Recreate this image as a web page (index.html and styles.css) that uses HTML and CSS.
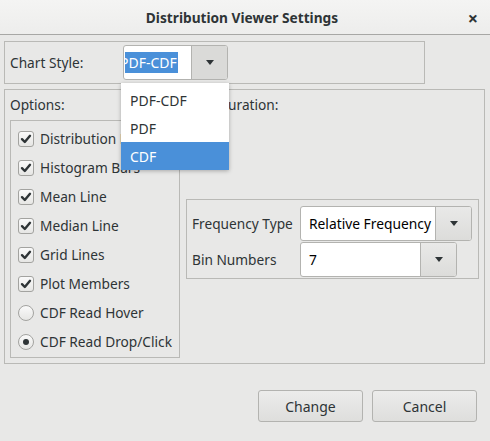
FILE: index.html
```html
<!DOCTYPE html>
<html>
<head>
<meta charset="utf-8">
<link rel="stylesheet" href="styles.css">
</head>
<body>
<div class="dialog">
  <div class="titlebar">
    <span class="title">Distribution Viewer Settings</span>
    <span class="close">×</span>
  </div>
  <div class="content">
    <div class="frame chart-frame">
      <span class="chart-label">Chart Style:</span>
      <div class="combo combo-chart">
        <div class="entry entry-sel"><div class="clip"><span class="sel">PDF-CDF</span></div></div>
        <div class="combo-btn"><span class="arrow"></span></div>
      </div>
    </div>
    <div class="frame options-frame">
      <div class="group-label">Options:</div>
      <div class="group-label">Configuration:</div>
      <div class="inner checks">
        <div class="row"><span class="check"><svg viewBox="0 0 16 16" width="16" height="16"><path d="M4 8.2 L6.8 11 L12 4.8" fill="none" stroke="#2e3436" stroke-width="2.4" stroke-linecap="round" stroke-linejoin="round"/></svg></span>Distribution Line</div>
        <div class="row"><span class="check"><svg viewBox="0 0 16 16" width="16" height="16"><path d="M4 8.2 L6.8 11 L12 4.8" fill="none" stroke="#2e3436" stroke-width="2.4" stroke-linecap="round" stroke-linejoin="round"/></svg></span>Histogram Bars</div>
        <div class="row"><span class="check"><svg viewBox="0 0 16 16" width="16" height="16"><path d="M4 8.2 L6.8 11 L12 4.8" fill="none" stroke="#2e3436" stroke-width="2.4" stroke-linecap="round" stroke-linejoin="round"/></svg></span>Mean Line</div>
        <div class="row"><span class="check"><svg viewBox="0 0 16 16" width="16" height="16"><path d="M4 8.2 L6.8 11 L12 4.8" fill="none" stroke="#2e3436" stroke-width="2.4" stroke-linecap="round" stroke-linejoin="round"/></svg></span>Median Line</div>
        <div class="row"><span class="check"><svg viewBox="0 0 16 16" width="16" height="16"><path d="M4 8.2 L6.8 11 L12 4.8" fill="none" stroke="#2e3436" stroke-width="2.4" stroke-linecap="round" stroke-linejoin="round"/></svg></span>Grid Lines</div>
        <div class="row"><span class="check"><svg viewBox="0 0 16 16" width="16" height="16"><path d="M4 8.2 L6.8 11 L12 4.8" fill="none" stroke="#2e3436" stroke-width="2.4" stroke-linecap="round" stroke-linejoin="round"/></svg></span>Plot Members</div>
        <div class="row"><span class="radio"></span>CDF Read Hover</div>
        <div class="row"><span class="radio on"><span class="dot"></span></span>CDF Read Drop/Click</div>
      </div>
      <div class="config-col">
        <div class="inner config">
          <span class="cfg-label">Frequency Type</span>
          <div class="combo combo-freq">
            <div class="entry">Relative Frequency</div>
            <div class="combo-btn"><span class="arrow"></span></div>
          </div>
          <span class="cfg-label">Bin Numbers</span>
          <div class="combo combo-bin">
            <div class="entry">7</div>
            <div class="combo-btn"><span class="arrow"></span></div>
          </div>
        </div>
      </div>
    </div>
    <div class="buttons">
      <button class="btn">Change</button>
      <button class="btn">Cancel</button>
    </div>
  </div>
  <div class="popup">
    <div class="item">PDF-CDF</div>
    <div class="item">PDF</div>
    <div class="item active">CDF</div>
  </div>
</div>
</body>
</html>
```

FILE: styles.css
```css
* { box-sizing: border-box; }
html, body { margin: 0; padding: 0; }
body {
  width: 490px;
  height: 441px;
  background: #e8e8e7;
  font-family: "Noto Sans", "Open Sans", sans-serif;
  font-size: 13.7px;
  color: #2e3436;
  overflow: hidden;
}
.dialog { position: relative; width: 490px; height: 441px; }
.titlebar {
  height: 35px;
  background: linear-gradient(#f4f4f3, #ededec);
  border-bottom: 1px solid #a7a7a5;
  display: flex;
  align-items: center;
  justify-content: center;
  position: relative;
}
.title { font-weight: bold; font-size: 13.7px; margin-left: -6px; }
.close {
  position: absolute;
  right: 12px;
  top: 6px;
  font-size: 18px;
  font-weight: bold;
}
.content { padding: 6px 5px 0 4px; }
.frame { border: 1px solid #b9b9b6; }
.chart-frame {
  width: 421px;
  height: 43px;
  display: flex;
  align-items: center;
  padding-left: 5px;
}
.chart-label { width: 113px; }
.combo {
  height: 35px;
  display: flex;
  border: 1px solid #b3b3b0;
  border-radius: 3px;
  background: #fff;
}
.entry {
  flex: 1;
  display: flex;
  align-items: center;
  padding-left: 8px;
  font-size: 13.8px;
  color: #000;
  overflow: hidden;
  white-space: nowrap;
}
.combo-btn {
  width: 36px;
  flex: none;
  border-left: 1px solid #b3b3b0;
  background: linear-gradient(#e9e9e8, #dcdcda);
  border-radius: 0 2px 2px 0;
  display: flex;
  align-items: center;
  justify-content: center;
}
.arrow {
  width: 0; height: 0;
  border-left: 4.5px solid transparent;
  border-right: 4.5px solid transparent;
  border-top: 5px solid #2e3436;
}
.combo-chart { width: 105px; }
.combo-chart .combo-btn { background: #dadad8; }
.entry-sel { padding-left: 1px; }
.clip { overflow: hidden; display: flex; flex: 1; }
.sel {
  background: #4a90d9;
  color: #fff;
  margin-left: -5px;
  padding: 1px 1px 1px 0;
  line-height: 19px;
  font-size: 14px;
}
.options-frame {
  margin-top: 5px;
  width: 481px;
  height: 275px;
  display: grid;
  grid-template-columns: 170px 293px;
  grid-template-rows: 30px 238px;
  column-gap: 6px;
  padding: 0 5px 0 5px;
}
.group-label { padding-top: 6px; line-height: 18px; }
.inner { border: 1px solid #b9b9b6; }
.checks { padding: 3px 0 0 7px; }
.row {
  height: 29px;
  display: flex;
  align-items: center;
  white-space: nowrap;
}
.check, .radio {
  width: 16px;
  height: 16px;
  margin-right: 6px;
  flex: none;
  border: 1px solid #a3a3a0;
  background: linear-gradient(#fafafa, #e6e6e4);
  display: flex;
  align-items: center;
  justify-content: center;
}
.check { border-radius: 3px; }
.check svg { display: block; margin: -1px; }
.radio { border-radius: 50%; }
.dot { width: 6px; height: 6px; border-radius: 50%; background: #2e3436; }
.config-col { display: flex; align-items: center; }
.config {
  width: 293px;
  height: 80px;
  display: grid;
  grid-template-columns: 108px 1fr;
  grid-template-rows: 35px 35px;
  row-gap: 1px;
  padding: 6px 0 0 5px;
  align-items: center;
}
.combo-freq { width: 172px; }
.combo-bin { width: 157px; }
.buttons {
  display: flex;
  justify-content: flex-end;
  gap: 9px;
  margin-top: 26px;
  padding-right: 8px;
}
.btn {
  width: 105px;
  height: 32px;
  font-family: inherit;
  font-size: 14px;
  color: #2e3436;
  border: 1px solid #b3b3b0;
  border-radius: 3px;
  background: linear-gradient(#ececeb, #dededc);
}
.popup {
  position: absolute;
  left: 121px;
  top: 83px;
  width: 108px;
  padding-top: 3px;
  background: #fff;
  box-shadow: 0 1px 4px rgba(0,0,0,0.28);
}
.item {
  height: 28px;
  padding-left: 9px;
  display: flex;
  align-items: center;
  font-size: 14px;
}
.item.active { background: #4a90d9; color: #fff; }
```
